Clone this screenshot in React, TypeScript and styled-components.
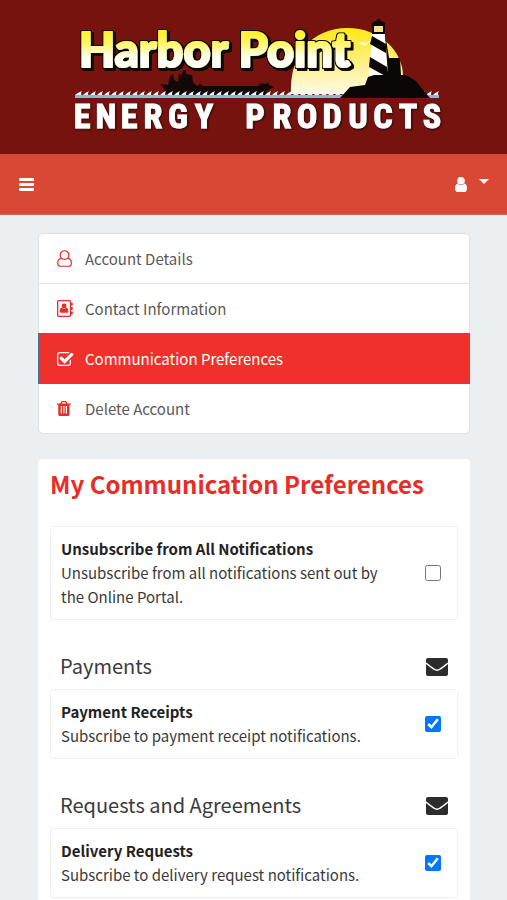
import React from "react";
import styled, { createGlobalStyle } from "styled-components";

const GlobalStyle = createGlobalStyle`
  *, *::before, *::after { box-sizing: border-box; }
  body {
    margin: 0;
    background: #ebeff2;
    color: #3a3a3a;
    font-family: "Noto Sans CJK SC", "Open Sans", sans-serif;
    font-size: 15px;
    line-height: 24px;
  }
  h1, h2, h3, p, ul { margin: 0; padding: 0; }
`;

const Banner = styled.header`
  display: flex;
  justify-content: center;
  height: 154px;
  background: #77130e;
`;

const Logo = styled.svg`
  width: 384px;
  height: 154px;
`;

const NavBar = styled.nav`
  display: flex;
  align-items: center;
  justify-content: space-between;
  height: 61px;
  padding: 0 18px 0 19px;
  background: #d94735;
  border-bottom: 1px solid #dd6657;
`;

const NavButton = styled.button`
  display: flex;
  align-items: center;
  gap: 12px;
  padding: 0;
  border: 0;
  background: none;
  color: #fff;
  cursor: pointer;
`;

const Caret = styled.span`
  margin-bottom: 6px;
  border: 5px solid transparent;
  border-top-color: #fff;
  border-bottom: 0;
`;

const Glyph = styled.svg<{ $size: number }>`
  display: block;
  height: ${(p) => p.$size}px;
  fill: currentColor;
  flex: none;
`;

const Main = styled.main`
  display: flex;
  flex-direction: column;
  gap: 25px;
  padding: 18px 37px 0 38px;
`;

const Menu = styled.ul`
  list-style: none;
  border-radius: 5px;
  background: #fff;
  border: 1px solid #dfe2e5;
`;

const MenuItem = styled.li`
  & + & { border-top: 1px solid #e2e3e5; }
`;

const MenuLink = styled.a`
  display: flex;
  align-items: center;
  height: 49px;
  padding: 0 18px;
  color: #5a5a5a;
  text-decoration: none;

  &[aria-current] {
    position: relative;
    z-index: 1;
    height: 51px;
    margin: -1px;
    background: #f0302a;
    color: #fff;
    border: 1px solid #46719f;
  }
`;

const MenuIcon = styled.span`
  display: flex;
  width: 28px;
  color: #e62d28;
  [aria-current] > & { color: #fff; }
`;

const Panel = styled.section`
  padding: 7px 12px 24px;
  border-radius: 4px;
  background: #fff;
`;

const Title = styled.h1`
  margin-bottom: 24px;
  color: #e62d28;
  font-size: 24px;
  line-height: 36px;
`;

const GroupHead = styled.div`
  display: flex;
  align-items: center;
  justify-content: space-between;
  height: 45px;
  margin-top: 24px;
  padding: 1px 10px 0;
`;

const GroupTitle = styled.h2`
  padding-bottom: 2px;
  font-size: 20px;
  line-height: 30px;
  font-weight: 400;
`;

const Option = styled.label`
  display: flex;
  align-items: center;
  justify-content: space-between;
  padding: 10px 16px 10px 10px;
  border: 1px solid #f1f1f2;
  border-radius: 3px;
  & + & { border-top: 0; }
`;

const OptionText = styled.span`
  display: flex;
  flex-direction: column;
  max-width: 336px;
`;

const OptionName = styled.strong`
  color: #222;
`;

const Check = styled.input`
  width: 16px;
  height: 16px;
  margin: 0;
  flex: none;
  accent-color: #0075ff;
`;

type IconProps = { size: number };

const BarsIcon = ({ size }: IconProps) => (
  <Glyph $size={size} viewBox="0 0 15 13" aria-hidden="true">
    <rect x="0" y="0" width="15" height="3" rx="1" />
    <rect x="0" y="5" width="15" height="3" rx="1" />
    <rect x="0" y="10" width="15" height="3" rx="1" />
  </Glyph>
);

const UserIcon = ({ size }: IconProps) => (
  <Glyph $size={size} viewBox="0 0 12 15" aria-hidden="true">
    <circle cx="6" cy="3.800" r="3.800" />
    <path d="M2.700 6.600C4.700 8.600 7.300 8.600 9.300 6.600C11.400 6.800 12 9 12 11.800C12 13.800 11 15 9.600 15H2.400C1 15 0 13.800 0 11.800C0 9 .6 6.800 2.700 6.600z" />
  </Glyph>
);

const UserOutlineIcon = ({ size }: IconProps) => (
  <Glyph $size={size} viewBox="0 0 16 18" aria-hidden="true">
    <path
      d="M4.300 8.900C2 9.200.8 11 .8 14.200c0 1.900 1.100 3 2.900 3h8.600c1.800 0 2.900-1.100 2.900-3 0-3.200-1.200-5-3.500-5.300M8 .8a4.600 4.600 0 0 1 4.600 4.600A4.600 4.600 0 0 1 8 10a4.600 4.600 0 0 1-4.600-4.600A4.600 4.600 0 0 1 8 .8z"
      fill="none"
      stroke="currentColor"
      strokeWidth="1.300"
    />
  </Glyph>
);

const AddressBookIcon = ({ size }: IconProps) => (
  <Glyph $size={size} viewBox="0 0 17 18" aria-hidden="true">
    <rect x=".7" y=".7" width="13.600" height="16.600" rx="1.200" fill="none" stroke="currentColor" strokeWidth="1.400" />
    <path d="M14.500 2.800h1.700q.5 0 .5.500v2q0 .5-.5.500h-1.700zM14.500 7.500h1.700q.5 0 .5.500v2q0 .5-.5.500h-1.700zM14.500 12.200h1.700q.5 0 .5.500v2q0 .5-.5.500h-1.700z" />
    <circle cx="7.500" cy="6.400" r="2.600" />
    <path d="M5.200 8.300Q7.500 10.300 9.800 8.300c1.700.1 2.200 1.900 2.200 3.500 0 1-.6 1.600-1.500 1.600h-6c-.9 0-1.500-.6-1.500-1.600 0-1.600.5-3.400 2.200-3.500z" />
  </Glyph>
);

const CheckSquareIcon = ({ size }: IconProps) => (
  <Glyph $size={size} viewBox="64 128 1664 1408" aria-hidden="true">
    <path d="M1472 930v318q0 119-84.500 203.500t-203.500 84.500h-832q-119 0-203.500-84.500t-84.500-203.500v-832q0-119 84.500-203.500t203.500-84.500h832q63 0 117 25 15 7 18 23 3 17-9 29l-49 49q-10 10-23 10-3 0-9-2-23-6-45-6h-832q-66 0-113 47t-47 113v832q0 66 47 113t113 47h832q66 0 113-47t47-113v-254q0-13 9-22l64-64q10-10 23-10 6 0 12 3 20 8 20 29zm231-489l-814 814q-24 24-57 24t-57-24l-430-430q-24-24-24-57t24-57l110-110q24-24 57-24t57 24l263 263 647-647q24-24 57-24t57 24l110 110q24 24 24 57t-24 57z" />
  </Glyph>
);

const TrashIcon = ({ size }: IconProps) => (
  <Glyph $size={size} viewBox="192 128 1408 1536" aria-hidden="true">
    <path
      fillRule="evenodd"
      d="M704 1376v-704q0-14-9-23t-23-9h-64q-14 0-23 9t-9 23v704q0 14 9 23t23 9h64q14 0 23-9t9-23zm256 0v-704q0-14-9-23t-23-9h-64q-14 0-23 9t-9 23v704q0 14 9 23t23 9h64q14 0 23-9t9-23zm256 0v-704q0-14-9-23t-23-9h-64q-14 0-23 9t-9 23v704q0 14 9 23t23 9h64q14 0 23-9t9-23zm-544-992h448l-48-117q-7-9-17-11h-317q-10 2-17 11zm928 32v64q0 14-9 23t-23 9h-96v948q0 83-47 143.500t-113 60.500h-832q-66 0-113-58.500t-47-141.500v-952h-96q-14 0-23-9t-9-23v-64q0-14 9-23t23-9h309l70-167q15-37 54-63t79-26h320q40 0 79 26t54 63l70 167h309q14 0 23 9t9 23z"
    />
  </Glyph>
);

const EnvelopeIcon = ({ size }: IconProps) => (
  <Glyph $size={size} viewBox="0 0 22 18" aria-label="Email" role="img">
    <rect width="22" height="18" rx="2" fill="#2c2c2c" />
    <path d="M0 5Q3.500 8 8 11.200Q11 13.200 14 11.200Q18.500 8 22 5" fill="none" stroke="#fff" strokeWidth="1.500" />
  </Glyph>
);

const waves = (from: number, to: number) => {
  let d = `M${from} 98V95`;
  for (let x = from; x < to; x += 7) d += `Q${x + 2} 93 ${x + 7} 91Q${x + 5} 94 ${x + 7} 96`;
  return `${d}V98Z`;
};

const HarborLogo = () => (
  <Logo viewBox="62 0 384 154" role="img" aria-label="Harbor Point Energy Products">
    <defs>
      <linearGradient id="sun" x1="0" y1="0" x2="0" y2="1">
        <stop offset="0" stopColor="#ffe817" />
        <stop offset=".55" stopColor="#fff08a" />
        <stop offset="1" stopColor="#fffbe8" />
      </linearGradient>
      <linearGradient id="name" gradientUnits="userSpaceOnUse" x1="0" y1="32" x2="0" y2="66">
        <stop offset="0" stopColor="#fff12a" />
        <stop offset=".35" stopColor="#fff66c" />
        <stop offset=".75" stopColor="#fffff0" />
      </linearGradient>
      <filter id="edge" x="-5%" y="-20%" width="110%" height="150%">
        <feMorphology in="SourceAlpha" operator="dilate" radius="1" result="fat" />
        <feOffset in="fat" dx="2" dy="2" result="low" />
        <feFlood floodColor="#0b0706" />
        <feComposite in2="low" operator="in" result="lowInk" />
        <feFlood floodColor="#0b0706" />
        <feComposite in2="fat" operator="in" result="fatInk" />
        <feMerge>
          <feMergeNode in="lowInk" />
          <feMergeNode in="fatInk" />
          <feMergeNode in="SourceGraphic" />
        </feMerge>
      </filter>
      <filter id="drop" x="-5%" y="-20%" width="110%" height="150%">
        <feDropShadow dx="1" dy="1" stdDeviation="1" floodColor="#1c0806" floodOpacity="1" />
      </filter>
    </defs>
    <path d="M291 94C289 54 313 28 347 28C381 28 403 52 403 76L390 94Z" fill="url(#sun)" />
    <path d="M358 44q5-4 7 0q5-5 9-3q-6 0-9 5q-3-3-7-2z" fill="#fff" />
    <path d="M161 84l7 1 2-8 3-3 1 6 4 2 1-8 3 1 1-5h3v4l6 1 1 7 4 4 3-2 3 2h55l3-3 5 1 2-2 1 3 5 2-7 4-2 5H168z" fill="#120807" />
    <path d={waves(75, 435)} fill="#f0f8fa" />
    <rect x="75" y="95" width="364" height="3" fill="#7dbfd8" />
    <path d="M372 34h13l3 42h-19z" fill="#fff" />
    <path d="M372 36l14 8v9l-16-9zM370 57l17 10 2 11-20-11z" fill="#0b0706" />
    <path d="M373 33V25h11v8z" fill="#f5df8c" stroke="#0b0706" strokeWidth="2" />
    <path d="M371 24l4-3h2v-2h3v2h2l4 3zM385 33l4 25h11l1 17h-13z" fill="#0b0706" />
    <path d="M340 98l10-11 15-2 3-8 6-2h32l10 6 8 10 6 7z" fill="#0b0706" />
    <text
      x="79"
      y="67"
      fontFamily="Lato, sans-serif"
      fontWeight="900"
      fontSize="47"
      fill="url(#name)"
      stroke="url(#name)"
      strokeWidth="2"
      strokeLinejoin="round"
      filter="url(#edge)"
    >
      Harbor Point
    </text>
    <text
      x="82 106 129 153 178 204 230 255 282 307 332 358 383 408 432"
      y="128"
      fontFamily="'Roboto Condensed', 'Liberation Sans Narrow', 'Liberation Sans', sans-serif"
      fontWeight="700"
      fontSize="34"
      textAnchor="middle"
      fill="#fff"
      stroke="#fff"
      filter="url(#drop)"
    >
      ENERGY PRODUCTS
    </text>
  </Logo>
);

const menu = [
  { label: "Account Details", icon: <UserOutlineIcon size={17} /> },
  { label: "Contact Information", icon: <AddressBookIcon size={17} /> },
  { label: "Communication Preferences", icon: <CheckSquareIcon size={14} />, current: true },
  { label: "Delete Account", icon: <TrashIcon size={15} /> },
];

type OptionData = { name: string; text: string; checked?: boolean };

const groups: { title: string; options: OptionData[] }[] = [
  {
    title: "Payments",
    options: [{ name: "Payment Receipts", text: "Subscribe to payment receipt notifications.", checked: true }],
  },
  {
    title: "Requests and Agreements",
    options: [{ name: "Delivery Requests", text: "Subscribe to delivery request notifications.", checked: true }],
  },
];

const Preference = ({ name, text, checked }: OptionData) => (
  <Option>
    <OptionText>
      <OptionName>{name}</OptionName>
      <span>{text}</span>
    </OptionText>
    <Check type="checkbox" defaultChecked={checked} />
  </Option>
);

export default function App() {
  return (
    <>
      <GlobalStyle />
      <Banner>
        <HarborLogo />
      </Banner>
      <NavBar>
        <NavButton aria-label="Menu">
          <BarsIcon size={13} />
        </NavButton>
        <NavButton aria-label="Account">
          <UserIcon size={15} />
          <Caret />
        </NavButton>
      </NavBar>
      <Main>
        <Menu>
          {menu.map((m) => (
            <MenuItem key={m.label}>
              <MenuLink href="#" aria-current={m.current ? "page" : undefined}>
                <MenuIcon>{m.icon}</MenuIcon>
                {m.label}
              </MenuLink>
            </MenuItem>
          ))}
        </Menu>
        <Panel>
          <Title>My Communication Preferences</Title>
          <Preference
            name="Unsubscribe from All Notifications"
            text="Unsubscribe from all notifications sent out by the Online Portal."
          />
          {groups.map((g) => (
            <React.Fragment key={g.title}>
              <GroupHead>
                <GroupTitle>{g.title}</GroupTitle>
                <EnvelopeIcon size={18} />
              </GroupHead>
              {g.options.map((o) => (
                <Preference key={o.name} {...o} />
              ))}
            </React.Fragment>
          ))}
        </Panel>
      </Main>
    </>
  );
}
